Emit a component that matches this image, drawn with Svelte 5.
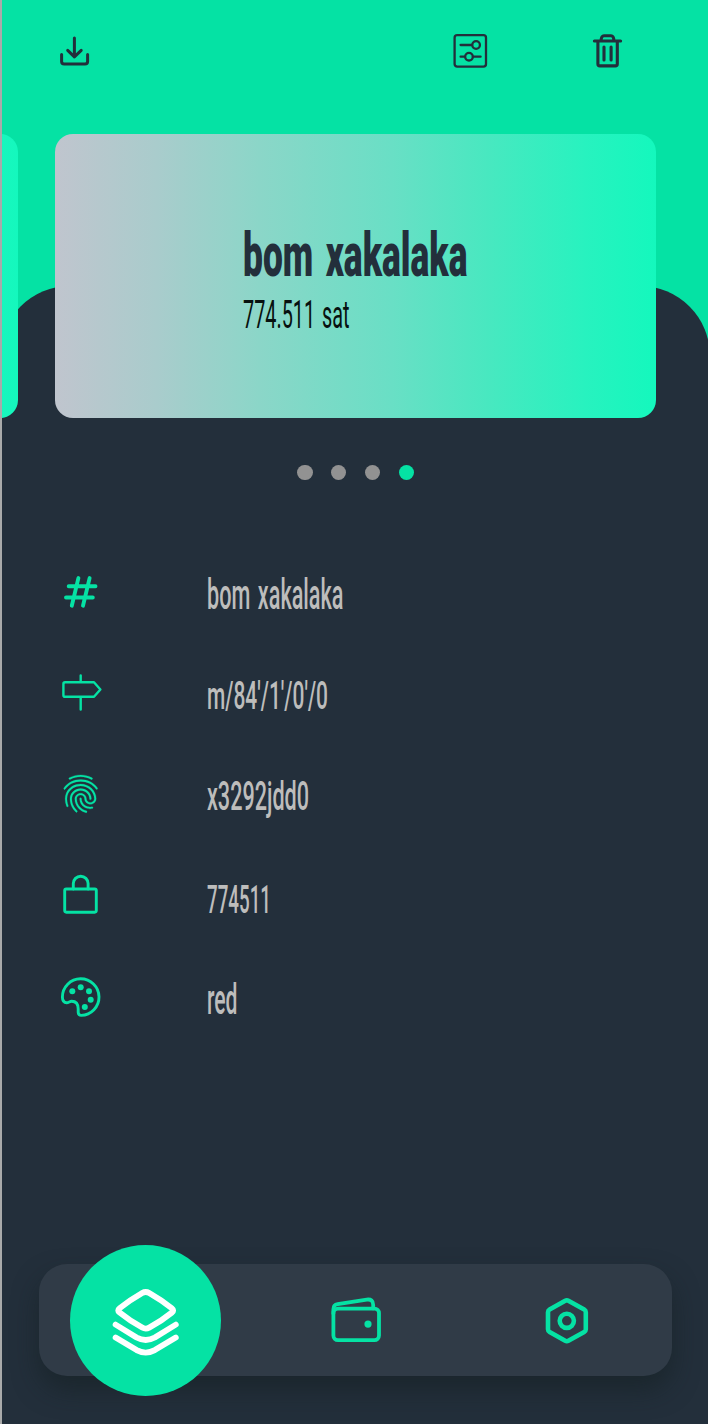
<script>
  const rows = [
    { icon: 'hash', text: 'bom xakalaka', width: 136.5, size: 43, base: 46.5 },
    { icon: 'sign', text: "m/84'/1'/0'/0", width: 121, size: 39, base: 45.5 },
    { icon: 'finger', text: 'x3292jdd0', width: 102, size: 40, base: 46.3 },
    { icon: 'lock', text: '774511', width: 64, size: 38.5, base: 46.5 },
    { icon: 'palette', text: 'red', width: 30.5, size: 42.5, base: 46.5 }
  ];
  const dots = [false, false, false, true];
</script>

<div class="screen">
  <header>
    <svg class="download" width="32" height="34" viewBox="0 0 32 34" stroke-width="3">
      <path d="M15.4 3V20.5M8.7 15.3L15.4 21.8L22.2 15.3M2.6 19.6V26.5Q2.6 29.1 5.2 29.1H26Q28.6 29.1 28.6 26.5V19.6" />
    </svg>
    <svg class="sliders" width="36" height="36" viewBox="0 0 36 36" stroke-width="2.3">
      <rect x="2.6" y="2.2" width="31.4" height="31.4" rx="2.6" />
      <path d="M8.6 12H19.8M8.6 23.7H12.8M21 23.7H28.6" />
      <circle cx="24.1" cy="12" r="3.8" />
      <circle cx="17" cy="23.7" r="3.8" />
    </svg>
    <svg class="trash" width="32" height="36" viewBox="0 0 32 36" stroke-width="3.1">
      <path d="M2.4 8H28.6M5.9 8V31Q5.9 32.9 7.8 32.9H23.4Q25.3 32.9 25.3 31V8M9 8Q9.2 2.7 12 2.7H19Q21.8 2.7 22 8" />
      <path d="M12 14V27M19.1 14V27" />
    </svg>
  </header>

  <section class="carousel">
    <div class="card previous"></div>
    <div class="card current">
      <svg class="label" width="400" height="130" viewBox="0 0 400 130">
        <text class="name" x="0" y="57" textLength="224.5" lengthAdjust="spacingAndGlyphs">bom xakalaka</text>
        <text class="balance" x="0" y="109" textLength="106.5" lengthAdjust="spacingAndGlyphs">774.511 sat</text>
      </svg>
    </div>
  </section>

  <main>
    <div class="dots">
      {#each dots as active}
        <span class:active></span>
      {/each}
    </div>

    <ul>
      {#each rows as row}
        <li>
          <svg class="icon" width="44" height="44" viewBox="0 0 44 44">
            {#if row.icon === 'hash'}
              <path stroke-width="3.9" d="M9.7 16.2H36.5M7 27.5H33.8M19.4 8.1L12.8 35.7M30.6 8.1L24 35.7" />
            {:else if row.icon === 'sign'}
              <path stroke-width="2.4" d="M21.7 4.4V11.3M21.7 25.8V38.5M6 11.3H35L41.4 18.5L35 25.8H6Q4.4 25.8 4.4 24.2V12.9Q4.4 11.3 6 11.3Z" />
            {:else if row.icon === 'finger'}
              <path class="solid finger" transform="translate(-1 -.9) scale(1.89)" d="M17.81 4.47c-.08 0-.16-.02-.23-.06C15.66 3.42 14 3 12.01 3c-1.98 0-3.86.47-5.57 1.41-.24.13-.54.04-.68-.2-.13-.24-.04-.55.2-.68C7.82 2.52 9.86 2 12.01 2c2.13 0 3.99.47 6.03 1.52.25.13.34.43.21.67-.09.18-.26.28-.44.28zM3.5 9.72c-.1 0-.2-.03-.29-.09-.23-.16-.28-.47-.12-.7.99-1.4 2.25-2.5 3.75-3.27C9.98 4.04 14 4.03 17.15 5.65c1.5.77 2.76 1.86 3.75 3.25.16.22.11.54-.12.7-.23.16-.54.11-.7-.12-.9-1.26-2.04-2.25-3.39-2.94-2.87-1.47-6.54-1.47-9.4.01-1.36.7-2.5 1.7-3.4 2.96-.08.14-.23.21-.39.21zm6.25 12.07c-.13 0-.26-.05-.35-.15-.87-.87-1.34-1.43-2.01-2.64-.69-1.23-1.05-2.73-1.05-4.34 0-2.97 2.54-5.39 5.66-5.39s5.66 2.42 5.66 5.39c0 .28-.22.5-.5.5s-.5-.22-.5-.5c0-2.42-2.09-4.39-4.66-4.39-2.57 0-4.66 1.97-4.66 4.39 0 1.44.32 2.77.93 3.85.64 1.15 1.08 1.64 1.85 2.42.19.2.19.51 0 .71-.11.1-.24.15-.37.15zm7.17-1.85c-1.19 0-2.24-.3-3.1-.89-1.49-1.01-2.38-2.65-2.38-4.39 0-.28.22-.5.5-.5s.5.22.5.5c0 1.41.72 2.74 1.94 3.56.71.48 1.54.71 2.54.71.24 0 .64-.03 1.04-.1.27-.05.53.13.58.41.05.27-.13.53-.41.58-.57.11-1.07.12-1.21.12zM14.91 22c-.04 0-.09-.01-.13-.02-1.59-.44-2.63-1.03-3.72-2.1-1.4-1.39-2.17-3.24-2.17-5.22 0-1.62 1.38-2.94 3.08-2.94 1.7 0 3.08 1.32 3.08 2.94 0 1.07.93 1.94 2.08 1.94s2.08-.87 2.08-1.94c0-3.77-3.25-6.83-7.25-6.83-2.84 0-5.44 1.58-6.61 4.03-.39.81-.59 1.76-.59 2.8 0 .78.07 2.01.67 3.61.1.26-.03.55-.29.64-.26.1-.55-.04-.64-.29-.49-1.31-.73-2.61-.73-3.96 0-1.2.23-2.29.68-3.24 1.33-2.79 4.28-4.6 7.51-4.6 4.55 0 8.25 3.51 8.25 7.83 0 1.62-1.38 2.94-3.08 2.94s-3.08-1.32-3.08-2.94c0-1.07-.93-1.94-2.08-1.94s-2.08.87-2.08 1.94c0 1.71.66 3.31 1.87 4.51.95.94 1.86 1.46 3.27 1.85.27.07.42.35.35.61-.05.23-.26.38-.47.38z" />
            {:else if row.icon === 'lock'}
              <g stroke-width="2.9">
                <rect x="5.7" y="15" width="31.6" height="23.2" rx="1.6" />
                <path d="M14.3 15V9.6a7.4 7.4 0 0 1 14.8 0V15" />
              </g>
            {:else}
              <path stroke-width="2.9" d="M3.4 22.1A18.3 18.3 0 1 1 22.2 40.4Q19.5 40.4 19.2 37.4V34Q19.2 26.4 12.6 26.3C10.8 26.3 9.6 27.7 7.7 27.7Q3.5 27.6 3.4 22.1Z" />
              <g class="solid">
                <circle cx="13.3" cy="16.3" r="3" />
                <circle cx="21.7" cy="12.3" r="3" />
                <circle cx="30" cy="16.3" r="3" />
                <circle cx="31.7" cy="24.7" r="3" />
                <circle cx="25.8" cy="32" r="3" />
              </g>
            {/if}
          </svg>
          <svg class="value" width="320" height="60" viewBox="0 0 320 60">
            <text x="0" y={row.base} font-size={row.size} textLength={row.width} lengthAdjust="spacingAndGlyphs">{row.text}</text>
          </svg>
        </li>
      {/each}
    </ul>

    <nav>
      <div class="tab selected">
        <svg width="70" height="70" viewBox="0 0 70 70" stroke-width="5.8">
          <path d="M31.2 7.1Q34.7 5 38.2 7.1Q51 14.5 60.8 22.2Q63.6 24.4 60.8 26.6Q51 34.6 38.2 41.6Q34.7 43.6 31.2 41.6Q18.4 34.6 8.6 26.6Q5.8 24.4 8.6 22.2Q18.4 14.5 31.2 7.1Z" />
          <path d="M4.6 38.6L25.6 51.5Q34.7 56.5 43.8 51.5L64.8 38.6M4.6 51.5L25.6 64.1Q34.7 69 43.8 64.1L64.8 51.5" />
        </svg>
      </div>
      <div class="tab">
        <svg width="52" height="50" viewBox="0 0 52 50" stroke-width="3.8">
          <rect x="3.4" y="12.6" width="45.6" height="31.6" rx="4.6" />
          <path d="M3.4 17.5V13.2Q3.4 8.9 7.6 8.2L36.8 3.6Q43.2 2.8 43.2 9V12.4" />
          <circle class="solid" cx="38" cy="28.1" r="3.6" />
        </svg>
      </div>
      <div class="tab">
        <svg width="48" height="50" viewBox="0 0 48 50" stroke-width="4.6">
          <path d="M22.2 4.8Q23.8 3.9 25.4 4.8L41.2 13.6Q42.8 14.5 42.8 16.3V33.3Q42.8 35.1 41.2 36L25.4 44.8Q23.8 45.7 22.2 44.8L6.6 36Q5 35.1 5 33.3V16.3Q5 14.5 6.6 13.6Z" />
          <circle cx="23.8" cy="24.8" r="7.1" />
        </svg>
      </div>
    </nav>
  </main>
</div>

<style>
  :global(body) { margin: 0; background: #05e2a4; overflow: hidden; }
  * { box-sizing: border-box; }
  .screen {
    height: 1424px;
    border-left: 2px solid #a9aaaa;
    background: #05e2a4;
    overflow: hidden;
    display: flex;
    flex-direction: column;
    font-family: Roboto, "Liberation Sans", sans-serif;
  }
  svg {
    display: block;
    flex: none;
    fill: none;
    stroke: currentColor;
    stroke-linecap: round;
    stroke-linejoin: round;
    overflow: visible;
  }
  .solid { fill: currentColor; stroke: none; }
  .finger { stroke: currentColor; stroke-width: .12; }
  text { fill: currentColor; stroke: none; word-spacing: .1em; }
  header {
    flex: none;
    height: 133.5px;
    display: flex;
    align-items: flex-start;
    padding: 33px 84px 0 57px;
    color: #232f3b;
  }
  .download { margin: 2px auto 0 0; }
  .sliders { margin-right: 104px; }
  .carousel {
    flex: none;
    position: relative;
    z-index: 1;
    height: 284px;
    display: flex;
    gap: 37px;
    margin-left: -584.3px;
  }
  .card {
    flex: none;
    width: 600.5px;
    border-radius: 18px;
    background: linear-gradient(90deg, #c0c5ce 0%, #a9cccc 17%, #8bd6c8 34%, #69dfc5 56%, #48e8c0 72%, #28f2bf 88%, #14f8bd 100%);
  }
  .current {
    padding: 85px 0 0 187.8px;
  }
  .name { font-size: 62px; font-weight: 900; fill: #232f3b; }
  .balance { font-size: 38.5px; font-weight: 400; fill: #07110f; }
  main {
    flex: 1;
    margin: -131.5px -2px 0 -2px;
    padding-top: 178.7px;
    border-radius: 70px 70px 0 0;
    background: #232f3b;
    color: #05e2a4;
    clip-path: inset(0 0 0 2px);
  }
  .dots {
    display: flex;
    justify-content: center;
    gap: 18.4px;
    height: 15.5px;
    padding-left: 1.2px;
  }
  .dots span {
    width: 15.5px;
    border-radius: 50%;
    background: #929292;
  }
  .dots .active { background: #05e2a4; }
  ul {
    list-style: none;
    margin: 60.8px 0 0;
    padding: 0 0 0 59px;
  }
  li {
    height: 101.3px;
    display: flex;
    align-items: center;
    gap: 104px;
  }
  .value { color: #bdbdbc; font-weight: 500; }
  nav {
    height: 112.5px;
    width: 633px;
    margin: 216.5px 0 0 39px;
    border-radius: 28px;
    background: #303b47;
    box-shadow: 0 14px 26px rgba(20, 31, 32, .55);
    display: grid;
    grid-template-columns: repeat(3, 1fr);
    align-items: center;
    justify-items: center;
    padding-top: 1.5px;
  }
  .selected {
    width: 151px;
    height: 151px;
    margin: -20px -1px -20px 1px;
    border-radius: 50%;
    background: #05e2a4;
    color: #fff;
    display: grid;
    place-items: center;
  }
</style>
